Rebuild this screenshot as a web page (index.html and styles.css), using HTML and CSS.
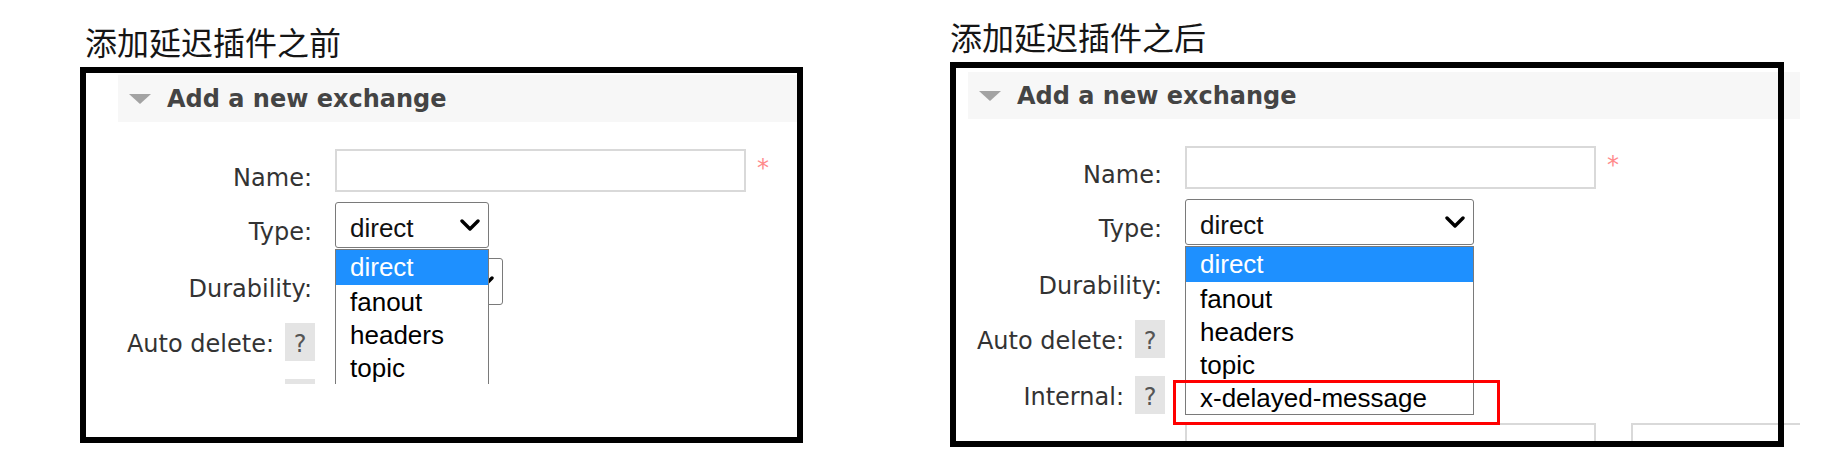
FILE: index.html
```html
<!DOCTYPE html>
<html lang="zh-CN">
<head>
<meta charset="utf-8">
<title>RabbitMQ exchange types</title>
<link rel="stylesheet" href="styles.css">
</head>
<body>
<main class="page">
  <section class="panel panel-before">
    <h2 class="caption caption-before">添加延迟插件之前</h2>
    <div class="frame frame-before">
      <div class="shot shot-before">
        <div class="section-head"><span class="toggle"></span><span class="section-title">Add a new exchange</span></div>
        <div class="form">
          <div class="row row-name">
            <span class="label">Name:</span>
            <div class="control control-top"><input class="text-input" type="text"><span class="req">*</span></div>
          </div>
          <div class="row row-type">
            <span class="label">Type:</span>
            <div class="control">
              <div class="select-wrap">
                <div class="select select-type-before"><span class="select-value">direct</span><svg class="chevron" viewBox="0 0 20 12"><polyline points="2,2 10,10 18,2"/></svg></div>
                <ul class="options">
                  <li class="option option-selected">direct</li>
                  <li class="option">fanout</li>
                  <li class="option">headers</li>
                  <li class="option">topic</li>
                </ul>
              </div>
            </div>
          </div>
          <div class="row row-durability">
            <span class="label">Durability:</span>
            <div class="control"><div class="select select-durability"><span class="select-value"></span><svg class="chevron" viewBox="0 0 20 12"><polyline points="2,2 10,10 18,2"/></svg></div></div>
          </div>
          <div class="row row-auto">
            <span class="label label-help"><span class="help-text">Auto delete:</span><span class="help">?</span></span>
          </div>
          <div class="row row-internal">
            <span class="label label-help"><span class="help"></span></span>
          </div>
        </div>
      </div>
    </div>
  </section>

  <section class="panel panel-after">
    <h2 class="caption">添加延迟插件之后</h2>
    <div class="frame frame-after">
      <div class="shot shot-after">
        <div class="section-head"><span class="toggle"></span><span class="section-title">Add a new exchange</span></div>
        <div class="form">
          <div class="row row-name">
            <span class="label">Name:</span>
            <div class="control control-top"><input class="text-input" type="text"><span class="req">*</span></div>
          </div>
          <div class="row row-type">
            <span class="label">Type:</span>
            <div class="control">
              <div class="select-wrap">
                <div class="select select-type-after"><span class="select-value">direct</span><svg class="chevron" viewBox="0 0 20 12"><polyline points="2,2 10,10 18,2"/></svg></div>
                <ul class="options">
                  <li class="option option-selected">direct</li>
                  <li class="option">fanout</li>
                  <li class="option">headers</li>
                  <li class="option">topic</li>
                  <li class="option">x-delayed-message</li>
                </ul>
              </div>
            </div>
          </div>
          <div class="row row-durability">
            <span class="label">Durability:</span>
            <div class="control"><div class="select select-durability"><span class="select-value"></span><svg class="chevron" viewBox="0 0 20 12"><polyline points="2,2 10,10 18,2"/></svg></div></div>
          </div>
          <div class="row row-auto">
            <span class="label label-help"><span class="help-text">Auto delete:</span><span class="help">?</span></span>
          </div>
          <div class="row row-internal">
            <span class="label label-help"><span class="help-text">Internal:</span><span class="help">?</span></span>
          </div>
          <div class="row row-args">
            <span class="label"></span>
            <div class="control"><input class="text-input" type="text"><span class="equals">=</span><input class="text-input text-input-value" type="text"></div>
          </div>
        </div>
      </div>
      <div class="mark-box"></div>
    </div>
  </section>
</main>
</body>
</html>
```

FILE: styles.css
```css
* { box-sizing: border-box; }

html, body {
  margin: 0;
  padding: 0;
  background: #fff;
}

body {
  width: 1828px;
  height: 474px;
  overflow: hidden;
  font-family: "DejaVu Sans", Verdana, sans-serif;
}

.page {
  display: flex;
  align-items: flex-start;
}

.panel-before {
  margin-left: 80px;
  margin-top: 21px;
}

.panel-after {
  margin-left: 147px;
  margin-top: 16px;
}

.caption {
  margin: 0 0 6px;
  font-family: "Noto Sans CJK SC", sans-serif;
  font-weight: 400;
  font-size: 32px;
  line-height: 40px;
  color: #151515;
}

.caption-before {
  padding-left: 5px;
}

.frame {
  position: relative;
  padding: 6px;
}

.frame::after {
  content: "";
  position: absolute;
  inset: 0;
  border: 6px solid #000;
  pointer-events: none;
  z-index: 4;
}

.frame-before {
  width: 723px;
  height: 376px;
}

.frame-after {
  width: 834px;
  height: 385px;
}

.shot {
  overflow: hidden;
  background: #fff;
}

.shot-before {
  height: 311px;
  padding: 2px 0 0 32px;
}

.shot-after {
  height: 373px;
  margin-right: -22px;
  padding: 4px 0 0 12px;
}

.section-head {
  display: flex;
  align-items: center;
  height: 47px;
  padding-left: 11px;
  background: #f7f7f7;
}

.toggle {
  width: 0;
  height: 0;
  border-left: 11px solid transparent;
  border-right: 11px solid transparent;
  border-top: 10px solid #a3a3a3;
}

.section-title {
  margin-left: 16px;
  font-size: 24px;
  font-weight: 700;
  color: #444;
  white-space: nowrap;
}

.form {
  display: flex;
  flex-direction: column;
  margin-top: 27px;
}

.row {
  display: flex;
  align-items: center;
}

.row-name { height: 43px; }
.row-type { height: 46px; margin-top: 10px; }
.row-durability { height: 47px; margin-top: 10px; }
.row-auto { height: 38px; margin-top: 18px; }
.row-internal { height: 38px; margin-top: 18px; }
.row-args { height: 43px; margin-top: 9px; }

.label {
  flex: none;
  width: 197px;
  padding: 14px 3px 0 0;
  text-align: right;
  font-size: 24px;
  color: #333;
  white-space: nowrap;
}

.label-help {
  display: flex;
  justify-content: flex-end;
  align-items: center;
  gap: 11px;
  height: 38px;
  padding: 0;
}

.help-text {
  padding-top: 4px;
}

.help {
  display: flex;
  align-items: center;
  justify-content: center;
  width: 30px;
  height: 38px;
  padding-top: 4px;
  background: #e4e4e4;
  color: #555;
}

.control {
  display: flex;
  align-items: center;
  margin-left: 20px;
}

.control-top {
  align-self: stretch;
  align-items: flex-start;
}

.text-input {
  flex: none;
  width: 411px;
  height: 43px;
  margin: 0;
  padding: 0;
  border: 2px solid #d9d9d9;
  background: #fff;
  outline: none;
}

.text-input-value {
  width: 300px;
}

.req {
  margin: 7px 0 0 11px;
  font-size: 24px;
  line-height: 24px;
  color: #ff8a8a;
}

.equals {
  margin: 0 5px 0 10px;
  font-size: 24px;
  color: #111;
}

.select-wrap {
  position: relative;
}

.select {
  display: flex;
  align-items: center;
  justify-content: space-between;
  height: 46px;
  padding: 0 8px 0 14px;
  border: 1px solid #7a7a7a;
  border-radius: 3px;
  background: #fff;
  font-family: "Liberation Sans", Arial, sans-serif;
  font-size: 26px;
  color: #111;
  white-space: nowrap;
}

.select-value {
  padding-top: 6px;
}

.select-type-before { width: 154px; }
.select-type-after { width: 289px; }

.select-durability {
  width: 168px;
  height: 47px;
}

.chevron {
  flex: none;
  width: 20px;
  height: 12px;
  fill: none;
  stroke: #000;
  stroke-width: 3.4;
  stroke-linecap: round;
  stroke-linejoin: round;
}

.options {
  position: absolute;
  top: calc(100% + 1px);
  left: 0;
  z-index: 2;
  width: 100%;
  margin: 0;
  padding: 0;
  list-style: none;
  background: #fff;
  border: 1px solid #7a7a7a;
  font-family: "Liberation Sans", Arial, sans-serif;
  font-size: 26px;
  color: #000;
}

.option {
  height: 33px;
  line-height: 31px;
  padding: 2px 0 0 14px;
  white-space: nowrap;
}

.option-selected {
  height: 35px;
  background: #1e90ff;
  color: #fff;
}

.mark-box {
  position: absolute;
  left: 223px;
  top: 318px;
  width: 327px;
  height: 45px;
  border: 3px solid #f00;
  z-index: 3;
}
```
